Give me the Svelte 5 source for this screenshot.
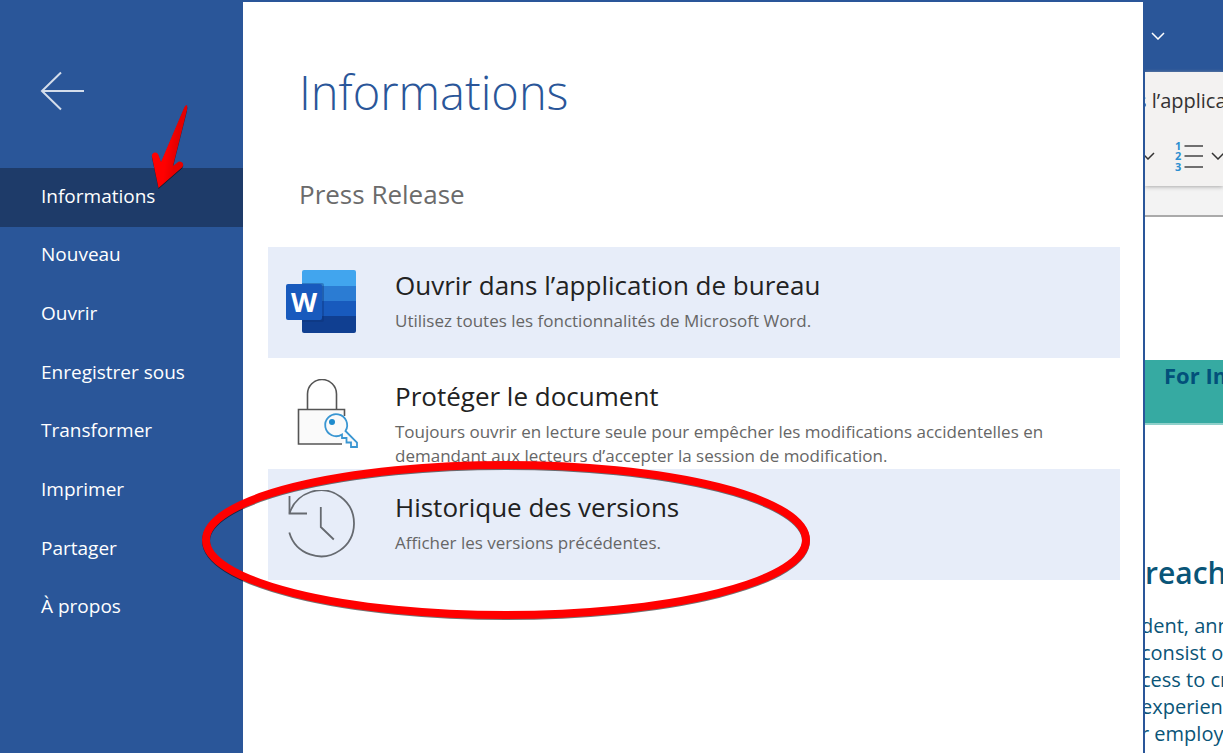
<script>
  const menu = [
    'Informations',
    'Nouveau',
    'Ouvrir',
    'Enregistrer sous',
    'Transformer',
    'Imprimer',
    'Partager',
    'À propos'
  ];

  const actions = [
    {
      icon: 'word',
      title: 'Ouvrir dans l’application de bureau',
      text: 'Utilisez toutes les fonctionnalités de Microsoft Word.'
    },
    {
      icon: 'protect',
      title: 'Protéger le document',
      text: 'Toujours ouvrir en lecture seule pour empêcher les modifications accidentelles en demandant aux lecteurs d’accepter la session de modification.'
    },
    {
      icon: 'history',
      title: 'Historique des versions',
      text: 'Afficher les versions précédentes.'
    }
  ];

  const lines = ['dent, announced', 'consist of three', 'cess to critical', 'experience with', 'r employees and', 's of the team in'];

  let current = $state('Informations');
</script>

<div class="screen">
  <nav class="sidebar">
    <button class="back" aria-label="Retour">
      <svg width="44" height="40" viewBox="0 0 44 40" fill="none" stroke="#d4ddeb" stroke-width="2">
        <path d="M21 1.500L2 20l19 18.500M2 20h42" />
      </svg>
    </button>
    <ul>
      {#each menu as item}
        <li>
          <button class="entry" class:active={item === current} onclick={() => (current = item)}>{item}</button>
        </li>
      {/each}
    </ul>
  </nav>

  <main class="panel">
    <h1>Informations</h1>
    <h2>Press Release</h2>
    <div class="actions">
      {#each actions as action}
        <button class="action">
          <span class="icon">
            {#if action.icon === 'word'}
              <svg width="72" height="66" viewBox="0 0 72 66">
                <defs>
                  <clipPath id="sheet"><rect x="16" y="2" width="54" height="63" rx="2" /></clipPath>
                </defs>
                <g clip-path="url(#sheet)">
                  <path fill="#41a5ee" d="M16 2h54v16H16z" />
                  <path fill="#2b7cd3" d="M16 18h54v15H16z" />
                  <path fill="#185abd" d="M16 33h54v15H16z" />
                  <path fill="#103f91" d="M16 48h54v17H16z" />
                  <path fill="#0b2f70" opacity="0.350" d="M16 15h20a2 2 0 0 1 2 2v35a2 2 0 0 1-2 2H16z" />
                </g>
                <rect y="16" width="36" height="36" rx="2" fill="#185abd" />
                <text class="letter" x="18" y="44" text-anchor="middle">W</text>
              </svg>
            {:else if action.icon === 'protect'}
              <svg width="72" height="70" viewBox="0 0 72 70" fill="none">
                <path d="M12 31h46v34H12z" fill="#fafafa" />
                <path d="M58.500 37v-6.500h-46V65H56M21.500 30V15a14.500 14.500 0 0 1 29 0v15" stroke="#555" stroke-width="1.600" />
                <path
                  d="M59.500 52l11.500 11.500V68h-6v-4.500h-4.500V59H56v-3.500A11 11 0 1 1 59.500 52z"
                  fill="#fafafa"
                  stroke="#3a96d2"
                  stroke-width="1.800"
                />
                <circle cx="46" cy="43" r="3" fill="#1e8bcd" />
              </svg>
            {:else}
              <svg width="72" height="70" viewBox="0 0 72 70" fill="none" stroke="#666a70" stroke-width="1.800">
                <path d="M3.500 23.500A33 33 0 1 1 3.300 42.500" />
                <path d="M3.500 6v17.500H21M34.800 17v20l13 12.500" />
              </svg>
            {/if}
          </span>
          <span class="copy">
            <span class="title">{action.title}</span>
            <span class="text">{action.text}</span>
          </span>
        </button>
      {/each}
    </div>
  </main>

  <section class="document">
    <header>
      <button class="plain" aria-label="Options">
        <svg width="14" height="8" viewBox="0 0 14 8" fill="none" stroke="#fff" stroke-width="1.500"><path d="M1 1l6 6 6-6" /></svg>
      </button>
    </header>
    <div class="ribbon">
      <button class="open-app">s l’application</button>
      <div class="tools">
        <button class="plain" aria-label="Puces">
          <svg width="14" height="8" viewBox="0 0 14 8" fill="none" stroke="#333" stroke-width="1.500"><path d="M1 1l6 6 6-6" /></svg>
        </button>
        <button class="plain" aria-label="Numérotation">
          <svg width="28" height="32" viewBox="0 0 28 32">
            <g class="digits"><text y="10">1</text><text y="20">2</text><text y="31">3</text></g>
            <path d="M9.500 6H28M9.500 16H28M9.500 27H28" stroke="#444" stroke-width="1.500" />
          </svg>
        </button>
        <button class="plain" aria-label="Options de numérotation">
          <svg width="14" height="8" viewBox="0 0 14 8" fill="none" stroke="#333" stroke-width="1.500"><path d="M1 1l6 6 6-6" /></svg>
        </button>
      </div>
    </div>
    <div class="ruler"></div>
    <article>
      <div class="banner">For Immediate</div>
      <h3>reach</h3>
      <p>
        {#each lines as line}
          <span>{line}</span>
        {/each}
      </p>
    </article>
  </section>

  <!-- red arrow and circle pointing at the steps to follow -->
  <svg class="marks" width="820" height="630" viewBox="0 0 820 630" aria-hidden="true">
    <defs>
      <filter id="shade" x="-10%" y="-10%" width="120%" height="120%" color-interpolation-filters="sRGB">
        <feDropShadow dx="0" dy="1" stdDeviation="0.500" flood-color="#000" flood-opacity="0.550" />
      </filter>
      <linearGradient id="red" x1="0" y1="0.300" x2="1" y2="0.600">
        <stop offset="0.450" stop-color="#f00" />
        <stop offset="0.700" stop-color="#e60000" />
      </linearGradient>
    </defs>
    <path
      filter="url(#shade)"
      fill="url(#red)"
      d="M186.500 105C188 106 187 109 187 110L173 166L178 162C182 160 185 165 182 167.500L158.500 188L152 157C151 152 157 151 158.500 155L161 162L184 108C185 106 186 105 186.500 105z"
    />
    <ellipse filter="url(#shade)" cx="506" cy="540" rx="300" ry="75" fill="none" stroke="#f00" stroke-width="8" />
  </svg>
</div>

<style>
  :global(body) {
    margin: 0;
    background: #fff;
  }

  .screen {
    position: relative;
    display: grid;
    grid-template-columns: 243px minmax(0, 1fr) 78px;
    height: 100vh;
    overflow: hidden;
    font-family: 'Open Sans', 'Noto Sans', sans-serif;
  }

  button {
    padding: 0;
    border: 0;
    background: none;
    color: inherit;
    font: inherit;
    text-align: left;
    cursor: pointer;
  }

  svg {
    display: block;
  }

  .sidebar {
    background: #2a5699;
    color: #fff;
  }

  .back {
    display: block;
    margin: 71px 0 57px 40px;
  }

  ul {
    display: grid;
    grid-auto-rows: 1fr;
    height: 469px;
    margin: 0;
    padding: 0;
    list-style: none;
  }

  .entry {
    width: 100%;
    height: 100%;
    padding: 0 0 3px 41px;
    font-size: 19px;
  }

  .entry.active {
    background: #1e3b69;
  }

  .panel {
    border-top: 2px solid #2a5699;
    border-right: 2px solid #2a5699;
    padding: 0 23px 0 25px;
    background: #fff;
  }

  h1 {
    margin: 55px 0 0 31px;
    color: #2a5699;
    font-size: 47px;
    font-weight: 300;
    line-height: 70px;
  }

  h2 {
    margin: 49px 0 35px 31px;
    color: #6b6b6b;
    font-size: 26px;
    font-weight: 400;
    line-height: 36px;
  }

  .action {
    display: flex;
    width: 100%;
    height: 111px;
    box-sizing: border-box;
    padding: 21px 72px 0 18px;
  }

  .action:nth-child(odd) {
    background: #e7edf9;
  }

  .icon {
    flex: none;
    width: 109px;
  }

  .letter {
    fill: #fff;
    font-size: 27px;
    font-weight: 700;
  }

  .title,
  .text {
    display: block;
  }

  .title {
    color: #222;
    font-size: 26px;
    line-height: 34px;
  }

  .text {
    margin-top: 7px;
    color: #666;
    font-size: 17px;
    line-height: 24px;
  }

  .document {
    min-width: 0;
    overflow: hidden;
    color: #0a5578;
    white-space: nowrap;
  }

  header {
    display: flex;
    align-items: center;
    height: 72px;
    padding-left: 6px;
    background: #2a5699;
  }

  .ribbon {
    position: relative;
    height: 114px;
    background: #f3f2f1;
    box-shadow: 0 1px 4px #aaa;
    color: #333;
  }

  .open-app {
    display: block;
    margin-left: -8px;
    padding-top: 15px;
    font-size: 20px;
    line-height: 28px;
  }

  .tools {
    display: flex;
    align-items: center;
    gap: 8px;
    margin: 25px 0 0 -4px;
  }

  .tools .plain:first-child {
    margin-right: 12px;
  }

  .plain {
    flex: none;
  }

  .digits {
    fill: #2b8fd0;
    font-size: 11px;
    font-weight: 700;
  }

  .ruler {
    height: 29px;
    border-bottom: 2px solid #aaa;
    background: #f3f3f3;
  }

  .banner {
    height: 65px;
    margin-top: 143px;
    padding-left: 19px;
    box-sizing: border-box;
    border-bottom: 2px solid #8fd0ca;
    background: #36aaa2;
    color: #02507a;
    font-size: 22px;
    font-weight: 700;
    line-height: 30px;
  }

  h3 {
    margin: 128px 0 0;
    font-size: 30px;
    font-weight: 600;
    line-height: 40px;
  }

  p {
    margin: 19px 0 0 -4px;
    font-size: 20px;
    line-height: 27px;
  }

  p span {
    display: block;
  }

  .marks {
    position: absolute;
    top: 0;
    left: 0;
    pointer-events: none;
  }
</style>
